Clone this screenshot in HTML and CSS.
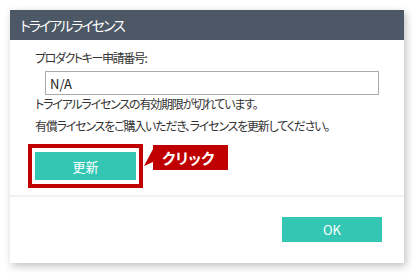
FILE: index.html
```html
<!DOCTYPE html>
<html lang="ja">
  <head>
    <meta charset="UTF-8" />
    <title>トライアルライセンス</title>
    <link rel="stylesheet" href="styles.css">
  </head>
  <body>
    <div class="dialog">
      <header class="dialog-title">トライアルライセンス</header>

      <main class="dialog-body">
        <label class="field-label" for="productKey">プロダクトキー申請番号:</label>
        <input id="productKey" class="field-input" type="text" value="N/A" readonly />
        <p class="message">トライアルライセンスの有効期限が切れています。</p>
        <p class="message message-second">有償ライセンスをご購入いただき、ライセンスを更新してください。</p>

        <div class="action-row">
          <div class="highlight">
            <button class="btn btn-renew" type="button">更新</button>
          </div>
          <div class="callout">
            <svg class="callout-tail" width="10" height="25" viewBox="0 0 10 25">
              <polygon points="10,4 1,21 10,17" fill="#c00000" />
            </svg>
            <span class="callout-label">クリック</span>
          </div>
        </div>
      </main>

      <footer class="dialog-footer">
        <button class="btn btn-ok" type="button">OK</button>
      </footer>
    </div>
  </body>
</html>
```

FILE: styles.css
```css
/* Trial license dialog */

* {
  margin: 0;
  padding: 0;
  box-sizing: border-box;
}

body {
  font-family: "Noto Sans CJK JP", "Noto Sans", sans-serif;
  font-feature-settings: "palt";
  color: #333;
  background: #fff;
  padding: 10px;
}

.dialog {
  width: 394px;
  background: #fff;
  box-shadow: 2px 3px 8px rgba(0, 0, 0, 0.25);
}

/* Title bar */
.dialog-title {
  height: 30px;
  line-height: 30px;
  padding-left: 10px;
  background: #4c5865;
  color: #fff;
  font-size: 14px;
  letter-spacing: -2px;
}

/* Body */
.dialog-body {
  padding: 9px 25px 7px;
}

.field-label {
  display: block;
  font-size: 12px;
  line-height: 18px;
  letter-spacing: -1.4px;
}

.field-input {
  display: block;
  width: 334px;
  height: 24px;
  margin: 4px 0 0 10px;
  padding: 0 4px;
  border: 1px solid #aaa;
  font-family: inherit;
  font-size: 13px;
  color: #222;
  outline: none;
}

.message {
  font-size: 12px;
  line-height: 18px;
  letter-spacing: -1.2px;
}

.message-second {
  margin-top: 4px;
}

/* Renew button + annotation */
.action-row {
  display: flex;
  align-items: flex-start;
  margin: 9px 0 0 -7px;
}

.highlight {
  border: 4px solid #c00000;
  padding: 4px 3px;
}

.callout {
  display: flex;
  margin-top: 1px;
}

.callout-tail {
  display: block;
}

.callout-label {
  width: 75px;
  height: 25px;
  line-height: 25px;
  padding-left: 9px;
  background: #c00000;
  color: #fff;
  font-size: 15px;
  font-weight: 700;
}

/* Buttons */
.btn {
  display: block;
  border: none;
  background: #33c7b3;
  color: #fff;
  font-family: inherit;
  font-size: 13px;
}

.btn-renew {
  width: 101px;
  height: 28px;
}

/* Footer */
.dialog-footer {
  display: flex;
  justify-content: flex-end;
  border-top: 2px solid #f2f2f2;
  padding: 20px 22px 21px;
}

.btn-ok {
  width: 100px;
  height: 25px;
}
```
